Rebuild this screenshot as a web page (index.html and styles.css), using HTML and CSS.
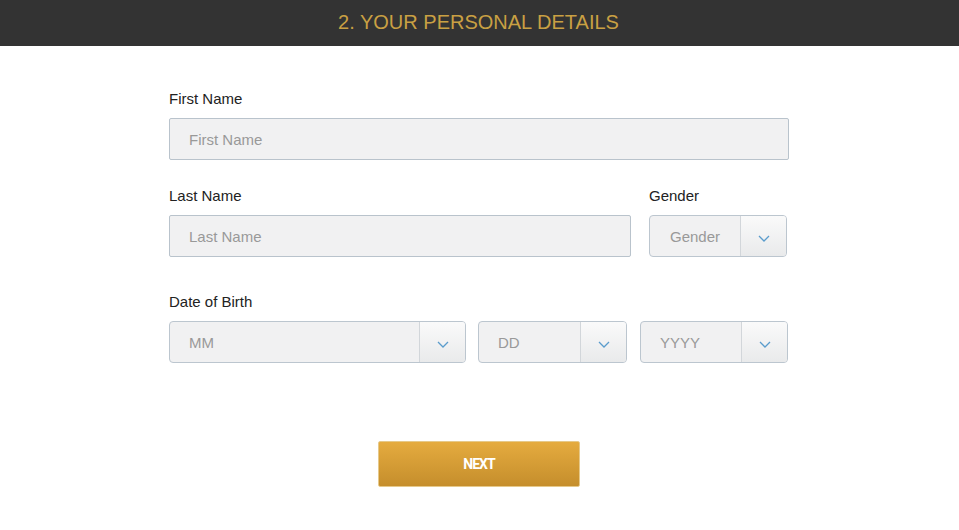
FILE: index.html
```html
<!DOCTYPE html>
<html lang="en">
<head>
    <meta charset="UTF-8">
    <meta name="viewport" content="width=device-width, initial-scale=1.0">
    <link rel="stylesheet" href="styles.css">
    <title>Your Personal Details</title>
</head>
<body>
    <div class="step-header">
        <h1>2. YOUR PERSONAL DETAILS</h1>
    </div>
    <form class="details-form">
        <div class="field">
            <label for="firstName">First Name</label>
            <input type="text" id="firstName" class="text-input" placeholder="First Name">
        </div>
        <div class="row">
            <div class="field grow">
                <label for="lastName">Last Name</label>
                <input type="text" id="lastName" class="text-input" placeholder="Last Name">
            </div>
            <div class="field gender">
                <label>Gender</label>
                <div class="select">
                    <span class="select-value">Gender</span>
                    <span class="select-arrow"><svg width="12" height="7" viewBox="0 0 12 7"><path d="M1 1l5 5 5-5" fill="none" stroke="#5a9ccc" stroke-width="1.3"/></svg></span>
                </div>
            </div>
        </div>
        <div class="field dob">
            <label>Date of Birth</label>
            <div class="dob-row">
                <div class="select mm">
                    <span class="select-value">MM</span>
                    <span class="select-arrow"><svg width="12" height="7" viewBox="0 0 12 7"><path d="M1 1l5 5 5-5" fill="none" stroke="#5a9ccc" stroke-width="1.3"/></svg></span>
                </div>
                <div class="select dd">
                    <span class="select-value">DD</span>
                    <span class="select-arrow"><svg width="12" height="7" viewBox="0 0 12 7"><path d="M1 1l5 5 5-5" fill="none" stroke="#5a9ccc" stroke-width="1.3"/></svg></span>
                </div>
                <div class="select yyyy">
                    <span class="select-value">YYYY</span>
                    <span class="select-arrow"><svg width="12" height="7" viewBox="0 0 12 7"><path d="M1 1l5 5 5-5" fill="none" stroke="#5a9ccc" stroke-width="1.3"/></svg></span>
                </div>
            </div>
        </div>
        <div class="actions">
            <button type="button" class="next-btn">NEXT</button>
        </div>
    </form>
</body>
</html>
```

FILE: styles.css
```css
body {
    margin: 0;
    padding: 0;
    background-color: #fff;
    font-family: "Liberation Sans", Arial, sans-serif;
    color: #222;
}

.step-header {
    background-color: #333;
    height: 46px;
    display: flex;
    align-items: center;
    justify-content: center;
}

.step-header h1 {
    margin: 0 2px 0 0;
    font-size: 20px;
    font-weight: normal;
    color: #c9a043;
    padding-bottom: 2px;
}

.details-form {
    width: 620px;
    margin: 0 0 0 169px;
    padding-top: 45px;
}

.field {
    display: flex;
    flex-direction: column;
}

.field label {
    font-size: 15px;
    line-height: 16px;
    margin-bottom: 11px;
}

.text-input {
    box-sizing: border-box;
    height: 42px;
    border: 1px solid #b9c3cc;
    border-radius: 2px;
    background-color: #f1f1f2;
    padding: 0 19px;
    font-family: inherit;
    font-size: 15px;
    color: #333;
}

.text-input::placeholder {
    color: #999;
}

.row {
    display: flex;
    gap: 18px;
    margin-top: 28px;
}

.grow {
    flex: 1;
}

.gender {
    width: 138px;
    margin-right: 2px;
}

.select {
    box-sizing: border-box;
    height: 42px;
    display: flex;
    border: 1px solid #bcc6cf;
    border-radius: 4px;
    background-color: #f1f1f2;
    overflow: hidden;
}

.select-value {
    flex: 1;
    display: flex;
    align-items: center;
    padding-left: 19px;
    font-size: 15px;
    color: #999;
}

.gender .select-value {
    padding-left: 20px;
}

.select-arrow {
    width: 45px;
    border-left: 1px solid #d2d6da;
    background: linear-gradient(#fafafa, #e9eaeb);
    display: flex;
    align-items: center;
    justify-content: center;
    padding-top: 4px;
}

.dob {
    margin-top: 37px;
}

.dob-row {
    display: flex;
    gap: 12px;
}

.mm {
    width: 297px;
}

.dd {
    width: 149px;
}

.yyyy {
    width: 148px;
    margin-left: 1px;
}

.actions {
    display: flex;
    justify-content: center;
    margin-top: 78px;
}

.next-btn {
    width: 202px;
    height: 46px;
    border: 1px solid #e6c98a;
    border-radius: 2px;
    background: linear-gradient(#e5ab3f, #c58e2c);
    color: #fff;
    font-family: "Roboto", sans-serif;
    font-weight: bold;
    font-size: 14px;
    letter-spacing: -1px;
    cursor: pointer;
}
```
